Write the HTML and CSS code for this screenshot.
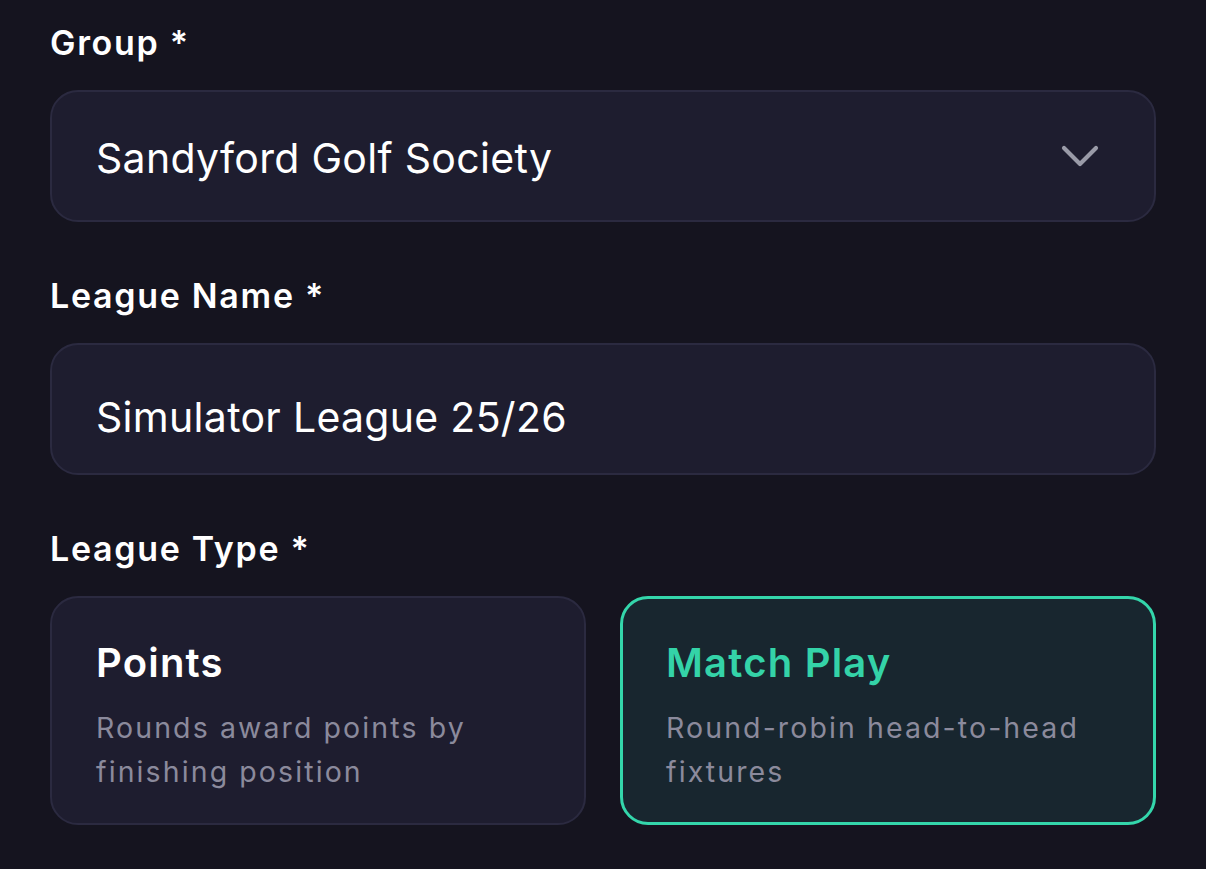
FILE: index.html
```html
<!DOCTYPE html>
<html lang="en">
<head>
<meta charset="utf-8">
<title>New League</title>
<link rel="stylesheet" href="styles.css">
</head>
<body>
<main class="form">
  <section class="field">
    <div class="label">Group *</div>
    <div class="box select">
      <span class="value">Sandyford Golf Society</span>
      <svg class="chevron" width="40" height="24" viewBox="0 0 40 24" aria-hidden="true">
        <path d="M4 4 L20 20 L36 4" fill="none" stroke="#9a9ba8" stroke-width="4.2" stroke-linecap="round" stroke-linejoin="round"/>
      </svg>
    </div>
  </section>
  <section class="field">
    <div class="label">League Name *</div>
    <div class="box input">
      <span class="value">Simulator League 25/26</span>
    </div>
  </section>
  <section class="field">
    <div class="label">League Type *</div>
    <div class="types">
      <div class="type">
        <div class="type-title">Points</div>
        <div class="type-desc">Rounds award points by finishing position</div>
      </div>
      <div class="type selected">
        <div class="type-title">Match Play</div>
        <div class="type-desc">Round-robin head-to-head fixtures</div>
      </div>
    </div>
  </section>
</main>
</body>
</html>
```

FILE: styles.css
```css
html, body {
  margin: 0;
  padding: 0;
  background: #15141f;
}
body {
  font-family: Inter, "Noto Sans", "Liberation Sans", sans-serif;
  color: #ffffff;
  -webkit-font-smoothing: antialiased;
}
.form {
  padding: 23px 50px 0 50px;
  display: flex;
  flex-direction: column;
  gap: 54px;
}
.field {
  display: flex;
  flex-direction: column;
  gap: 27px;
}
.label {
  font-size: 34px;
  line-height: 40px;
  font-weight: 600;
  letter-spacing: 1.7px;
  color: #ffffff;
}
.box {
  box-sizing: border-box;
  height: 132px;
  border: 2px solid #2b2a40;
  border-radius: 28px;
  background: #1e1d2f;
  display: flex;
  align-items: center;
  padding: 0 54px 0 44px;
}
.value {
  font-size: 41px;
  line-height: 48px;
  font-weight: 400;
  letter-spacing: 0.3px;
  color: #ffffff;
  flex: 1;
}
.select .value {
  padding-top: 4px;
}
.input .value {
  padding-top: 15px;
}
.chevron {
  flex: none;
  display: block;
}
.types {
  display: grid;
  grid-template-columns: 1fr 1fr;
  gap: 34px;
}
.type {
  box-sizing: border-box;
  height: 229px;
  border: 2px solid #2b2a40;
  border-radius: 28px;
  background: #1e1d2f;
  padding: 41px 44px 30px 44px;
  display: flex;
  flex-direction: column;
  gap: 19px;
}
.type.selected {
  border: 3px solid #34d6ab;
  background: #18262f;
  padding: 40px 43px 29px 43px;
}
.type-title {
  font-size: 40px;
  line-height: 48px;
  font-weight: 600;
  letter-spacing: 1.2px;
  color: #ffffff;
}
.type.selected .type-title {
  color: #34d3a8;
}
.type-desc {
  font-size: 28.5px;
  line-height: 44px;
  letter-spacing: 2.1px;
  color: #8b8a9c;
}
```
